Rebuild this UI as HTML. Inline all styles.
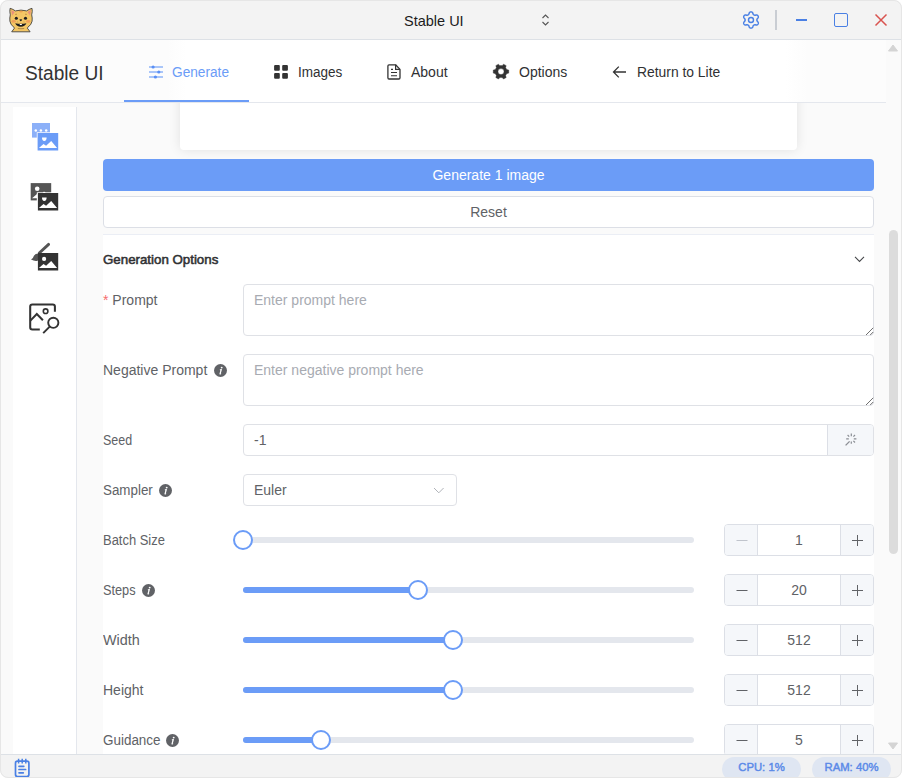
<!DOCTYPE html>
<html><head><meta charset="utf-8">
<style>
*{box-sizing:border-box;margin:0;padding:0}
html,body{width:902px;height:778px;overflow:hidden;background:#fff;font-family:"Liberation Sans",sans-serif}
.a{position:absolute}
#win{position:absolute;left:0;top:0;width:902px;height:778px;border-radius:8px;overflow:hidden;background:#fafafa}
#frame{position:absolute;left:0;top:0;width:902px;height:778px;border:1px solid #e6e6e6;border-radius:8px;pointer-events:none}
.t{white-space:nowrap;line-height:1}
.lbl{position:absolute;left:103px;font-size:14px;color:#606266;white-space:nowrap;line-height:16px}
.box{position:absolute;background:#fff;border:1px solid #dfe1e6;border-radius:4px}
.ph{position:absolute;font-size:14px;color:#a8abb2;white-space:nowrap;line-height:16px}
.info{position:absolute;width:13px;height:13px}
.track{position:absolute;left:243px;width:451px;height:6px;border-radius:3px;background:#e4e7ed}
.fill{position:absolute;left:0;top:0;height:6px;border-radius:3px;background:#6b9cf7}
.thumb{position:absolute;width:20px;height:20px;border:2px solid #6b9cf7;border-radius:50%;background:#fff}
.num{position:absolute;left:724px;width:150px;height:32px;background:#fff;border:1px solid #dcdfe6;border-radius:4px;overflow:hidden}
.num .m,.num .p{position:absolute;top:0;width:33px;height:30px;background:#f5f7fa;color:#606266}.num svg{display:block}
.num .m{left:0;border-right:1px solid #dcdfe6}
.num .p{right:0;border-left:1px solid #dcdfe6}
.num .v{position:absolute;left:33px;right:33px;top:0;height:30px;line-height:30px;text-align:center;font-size:14px;color:#606266}
</style></head><body>
<div id="win">
  <!-- scroll content -->
  <div class="a" style="left:0;top:40px;width:886px;height:714px;background:#fafafa"></div>
  <!-- left strip + sidebar -->
  <div class="a" style="left:13px;top:107px;width:64px;height:647px;background:#fff;border-right:1px solid #e4e7ed"></div>
  <!-- sidebar icons -->
  <svg class="a" style="left:28px;top:119px" width="34" height="36" viewBox="28 119 34 36">
    <rect x="32" y="123" width="18" height="14.6" fill="#8cb0f8"/>
    <circle cx="35.8" cy="130.4" r="1.25" fill="#fff"/><circle cx="40.9" cy="130.4" r="1.25" fill="#fff"/><circle cx="46.2" cy="130.4" r="1.25" fill="#fff"/>
    <rect x="36.8" y="132.3" width="22" height="19" fill="#fff"/>
    <rect x="37.6" y="133" width="20.6" height="17.5" fill="#6b9cf7"/>
    <path d="M42 137.6 L46.6 137.6 Q46.6 141 44.3 141 Q42 141 42 137.6Z" fill="#fff"/>
    <path d="M38.9 147.9 L43.5 144 L46.1 145.8 L51.2 141 L57.1 147.9 Z" fill="#fff"/>
  </svg>
  <svg class="a" style="left:28px;top:179px" width="34" height="36" viewBox="28 179 34 36">
    <rect x="30.7" y="183.1" width="20.5" height="17.3" fill="#555"/>
    <circle cx="37.2" cy="188.8" r="2.3" fill="#fff"/>
    <path d="M32 198.2 L37 194 L40 196 L44 191.5 L47 194 L47 198.2 Z" fill="#fff"/>
    <rect x="36.8" y="192.3" width="22" height="19" fill="#fff"/>
    <rect x="37.9" y="193" width="20.3" height="17.5" fill="#333"/>
    <path d="M42 197.6 L46.6 197.6 Q46.6 201 44.3 201 Q42 201 42 197.6Z" fill="#fff"/>
    <path d="M38.9 207.9 L43.5 204 L46.1 205.8 L51.2 201 L57.1 207.9 Z" fill="#fff"/>
  </svg>
  <svg class="a" style="left:28px;top:239px" width="34" height="36" viewBox="28 239 34 36">
    <path d="M48.6 244.4 L39.3 253" stroke="#555" stroke-width="2.9" stroke-linecap="round"/>
    <path d="M39.5 253.6 Q35.2 253.4 33.8 256 Q33.3 258.4 31 259.6 Q34.3 261.3 36.8 260.9 Q39.5 260.3 39.5 257 Z" fill="#555"/>
    <rect x="37.9" y="253" width="20.3" height="17.5" fill="#333"/>
    <circle cx="44.1" cy="258.9" r="2.1" fill="#fff"/>
    <path d="M38.9 267.9 L43.5 264 L46.1 265.8 L51.2 261 L57.1 267.9 Z" fill="#fff"/>
  </svg>
  <svg class="a" style="left:28px;top:299px" width="34" height="38" viewBox="28 299 34 38">
    <path d="M54.9 311.8 L54.9 306.6 Q54.9 304.4 52.7 304.4 L32.4 304.4 Q30.2 304.4 30.2 306.6 L30.2 327.2 Q30.2 329.4 32.4 329.4 L39.8 329.4" fill="none" stroke="#333" stroke-width="2.05"/>
    <path d="M30.4 320.6 L36.8 314 L42.9 320.2" fill="none" stroke="#333" stroke-width="2"/>
    <circle cx="45.6" cy="311.2" r="2.3" fill="none" stroke="#333" stroke-width="1.6"/>
    <circle cx="53.3" cy="322.8" r="5.1" fill="none" stroke="#333" stroke-width="1.9"/>
    <path d="M49.7 326.6 L43.2 333.1" stroke="#333" stroke-width="1.9"/>
  </svg>
  <!-- card -->
  <div class="a" style="left:180px;top:20px;width:617px;height:130px;background:#fff;border-radius:4px;box-shadow:0 0 12px rgba(0,0,0,.1)"></div>
  <!-- buttons -->
  <div class="a t" style="left:103px;top:159px;width:771px;height:32px;background:#6b9cf7;border-radius:4px;color:#fff;font-size:14px;line-height:32px;text-align:center">Generate 1 image</div>
  <div class="a t" style="left:103px;top:196px;width:771px;height:32px;background:#fff;border:1px solid #dcdfe6;border-radius:4px;color:#606266;font-size:14px;line-height:30px;text-align:center">Reset</div>
  <!-- section -->
  <div class="a" style="left:103px;top:234px;width:771px;height:530px;background:#fff;border-top:1px solid #ebeef5"></div>
  <div class="a t" style="left:103px;top:253px;font-size:13.3px;-webkit-text-stroke:0.55px #303133;color:#303133">Generation Options</div>
  <svg class="a" style="left:853px;top:254px" width="13" height="10" viewBox="0 0 13 10"><path d="M2 2.8 L6.5 7.4 L11 2.8" fill="none" stroke="#45474a" stroke-width="1.05"/></svg>

  <div class="lbl" style="top:292px"><span style="color:#f56c6c">*</span> Prompt</div>
  <div class="box" style="left:243px;top:284px;width:631px;height:52px"></div>
  <div class="ph" style="left:254px;top:292px">Enter prompt here</div>

  <div class="lbl" style="top:362px">Negative Prompt</div>
  <div class="info" style="left:214px;top:364px"><svg width="13" height="13" viewBox="0 0 13 13" style="display:block"><circle cx="6.5" cy="6.5" r="6.5" fill="#606266"/><circle cx="7.7" cy="3.6" r="0.95" fill="#fff"/><path d="M7.3 5.6 L6.1 9.6 Q5.9 10.2 6.6 9.8 M6.4 5.9 L7.3 5.6" fill="none" stroke="#fff" stroke-width="1.25" stroke-linecap="round" stroke-linejoin="round"/></svg></div>
  <div class="box" style="left:243px;top:354px;width:631px;height:52px"></div>
  <div class="ph" style="left:254px;top:362px">Enter negative prompt here</div>

  <div class="lbl" style="top:432px;transform:scaleX(0.89);transform-origin:0 0">Seed</div>
  <div class="box" style="left:243px;top:424px;width:631px;height:32px;overflow:hidden">
    <div class="a" style="right:0;top:0;width:46px;height:30px;background:#f5f7fa;border-left:1px solid #dcdfe6"></div>
  </div>
  <div class="ph" style="left:254px;top:432px;color:#606266">-1</div>

  <svg class="a" style="left:843px;top:431px" width="16" height="16" viewBox="843 431 16 16">
    <path d="M845.6 445.4 L849.6 441.4" stroke="#8a8d93" stroke-width="1.3"/>
    <path d="M851.3 433.6 L851.3 436.2 M851.3 441.4 L851.3 443.8 M846.2 438.8 L848.8 438.8 M853.8 438.8 L856.4 438.8 M847.6 435 L849.2 436.6 M853.4 440.9 L855 442.5 M855 435 L853.4 436.6" stroke="#8a8d93" stroke-width="1.2"/>
  </svg>
  <svg class="a" style="left:862px;top:324px" width="12" height="12" viewBox="0 0 12 12"><path d="M4 11 L11.2 3.8 M8.2 11 L11.2 8" stroke="#555" stroke-width="0.85"/></svg>
  <svg class="a" style="left:862px;top:394px" width="12" height="12" viewBox="0 0 12 12"><path d="M4 11 L11.2 3.8 M8.2 11 L11.2 8" stroke="#555" stroke-width="0.85"/></svg>
  <div class="lbl" style="top:482px;transform:scaleX(0.955);transform-origin:0 0">Sampler</div>
  <div class="info" style="left:159px;top:484px"><svg width="13" height="13" viewBox="0 0 13 13" style="display:block"><circle cx="6.5" cy="6.5" r="6.5" fill="#606266"/><circle cx="7.7" cy="3.6" r="0.95" fill="#fff"/><path d="M7.3 5.6 L6.1 9.6 Q5.9 10.2 6.6 9.8 M6.4 5.9 L7.3 5.6" fill="none" stroke="#fff" stroke-width="1.25" stroke-linecap="round" stroke-linejoin="round"/></svg></div>
  <div class="box" style="left:243px;top:474px;width:214px;height:32px"></div>
  <div class="ph" style="left:254px;top:482px;color:#606266">Euler</div>
  <svg class="a" style="left:432px;top:486px" width="13" height="9" viewBox="0 0 13 9"><path d="M2 2 L6.8 6.8 L11.6 2" fill="none" stroke="#b0b3b9" stroke-width="1"/></svg>

  <div class="lbl" style="top:532px;transform:scaleX(0.925);transform-origin:0 0">Batch Size</div>
  <div class="track" style="top:537px"><div class="fill" style="width:0"></div></div>
  <div class="thumb" style="left:233px;top:530px"></div>
  <div class="num" style="top:524px"><div class="m" style="color:#c0c4cc"><svg width="33" height="30" viewBox="0 0 33 30"><path d="M11.5 15.5 L22.5 15.5" stroke="currentColor" stroke-width="1.05"/></svg></div><div class="v">1</div><div class="p"><svg width="33" height="30" viewBox="0 0 33 30"><path d="M11 15.5 L22 15.5 M16.5 10 L16.5 21" stroke="currentColor" stroke-width="1.05"/></svg></div></div>

  <div class="lbl" style="top:582px;transform:scaleX(0.91);transform-origin:0 0">Steps</div>
  <div class="info" style="left:142px;top:584px"><svg width="13" height="13" viewBox="0 0 13 13" style="display:block"><circle cx="6.5" cy="6.5" r="6.5" fill="#606266"/><circle cx="7.7" cy="3.6" r="0.95" fill="#fff"/><path d="M7.3 5.6 L6.1 9.6 Q5.9 10.2 6.6 9.8 M6.4 5.9 L7.3 5.6" fill="none" stroke="#fff" stroke-width="1.25" stroke-linecap="round" stroke-linejoin="round"/></svg></div>
  <div class="track" style="top:587px"><div class="fill" style="width:175px"></div></div>
  <div class="thumb" style="left:408px;top:580px"></div>
  <div class="num" style="top:574px"><div class="m"><svg width="33" height="30" viewBox="0 0 33 30"><path d="M11.5 15.5 L22.5 15.5" stroke="currentColor" stroke-width="1.05"/></svg></div><div class="v">20</div><div class="p"><svg width="33" height="30" viewBox="0 0 33 30"><path d="M11 15.5 L22 15.5 M16.5 10 L16.5 21" stroke="currentColor" stroke-width="1.05"/></svg></div></div>

  <div class="lbl" style="top:632px;transform:scaleX(1.03);transform-origin:0 0">Width</div>
  <div class="track" style="top:637px"><div class="fill" style="width:210px"></div></div>
  <div class="thumb" style="left:443px;top:630px"></div>
  <div class="num" style="top:624px"><div class="m"><svg width="33" height="30" viewBox="0 0 33 30"><path d="M11.5 15.5 L22.5 15.5" stroke="currentColor" stroke-width="1.05"/></svg></div><div class="v">512</div><div class="p"><svg width="33" height="30" viewBox="0 0 33 30"><path d="M11 15.5 L22 15.5 M16.5 10 L16.5 21" stroke="currentColor" stroke-width="1.05"/></svg></div></div>

  <div class="lbl" style="top:682px">Height</div>
  <div class="track" style="top:687px"><div class="fill" style="width:210px"></div></div>
  <div class="thumb" style="left:443px;top:680px"></div>
  <div class="num" style="top:674px"><div class="m"><svg width="33" height="30" viewBox="0 0 33 30"><path d="M11.5 15.5 L22.5 15.5" stroke="currentColor" stroke-width="1.05"/></svg></div><div class="v">512</div><div class="p"><svg width="33" height="30" viewBox="0 0 33 30"><path d="M11 15.5 L22 15.5 M16.5 10 L16.5 21" stroke="currentColor" stroke-width="1.05"/></svg></div></div>

  <div class="lbl" style="top:732px;transform:scaleX(0.96);transform-origin:0 0">Guidance</div>
  <div class="info" style="left:166px;top:734px"><svg width="13" height="13" viewBox="0 0 13 13" style="display:block"><circle cx="6.5" cy="6.5" r="6.5" fill="#606266"/><circle cx="7.7" cy="3.6" r="0.95" fill="#fff"/><path d="M7.3 5.6 L6.1 9.6 Q5.9 10.2 6.6 9.8 M6.4 5.9 L7.3 5.6" fill="none" stroke="#fff" stroke-width="1.25" stroke-linecap="round" stroke-linejoin="round"/></svg></div>
  <div class="track" style="top:737px"><div class="fill" style="width:78px"></div></div>
  <div class="thumb" style="left:311px;top:730px"></div>
  <div class="num" style="top:724px"><div class="m"><svg width="33" height="30" viewBox="0 0 33 30"><path d="M11.5 15.5 L22.5 15.5" stroke="currentColor" stroke-width="1.05"/></svg></div><div class="v">5</div><div class="p"><svg width="33" height="30" viewBox="0 0 33 30"><path d="M11 15.5 L22 15.5 M16.5 10 L16.5 21" stroke="currentColor" stroke-width="1.05"/></svg></div></div>

  <!-- header (translucent) -->
  <div class="a" style="left:0;top:40px;width:886px;height:63px;background:linear-gradient(90deg,#fcfcfc 0,#fcfcfc 168px,#fff 186px,#fff 786px,#fcfcfc 808px);border-bottom:1px solid #e4e7ed"></div>
  <div class="a t" style="left:25px;top:63px;font-size:20px;color:#333;transform:scaleX(0.955);transform-origin:0 0">Stable UI</div>
  <div class="a" style="left:124px;top:100px;width:125px;height:2px;background:#6b9cf7"></div>
  <svg class="a" style="left:148px;top:64px" width="16" height="16" viewBox="148 64 16 16">
    <path d="M149 67 L163 67 M149 72 L163 72 M149 77 L163 77" stroke="#6b9cf7" stroke-width="1.3" opacity=".75"/>
    <circle cx="153.1" cy="67" r="1.6" fill="#5a8ff5"/><circle cx="158.8" cy="72" r="1.6" fill="#5a8ff5"/><circle cx="155.4" cy="77" r="1.6" fill="#5a8ff5"/>
  </svg>
  <svg class="a" style="left:273px;top:64px" width="16" height="16" viewBox="273 64 16 16">
    <rect x="274.1" y="65.1" width="5.7" height="5.7" rx="1" fill="#333"/><rect x="282.2" y="65.1" width="5.7" height="5.7" rx="1" fill="#333"/>
    <rect x="274.1" y="73.1" width="5.7" height="5.6" rx="1" fill="#333"/><rect x="282.2" y="73.1" width="5.7" height="5.6" rx="1" fill="#333"/>
  </svg>
  <svg class="a" style="left:386px;top:63px" width="16" height="18" viewBox="386 63 16 18">
    <path d="M389 64.8 L395.6 64.8 L400 69.4 L400 77.8 Q400 79 398.8 79 L389 79 Q387.9 79 387.9 77.8 L387.9 66 Q387.9 64.8 389 64.8 Z" fill="none" stroke="#333" stroke-width="1.3" stroke-linejoin="round"/>
    <path d="M395.6 64.8 L395.6 69.4 L400 69.4" fill="none" stroke="#333" stroke-width="1.2"/>
    <path d="M391 69.4 L393 69.4 M391 72.5 L397 72.5 M391 75.8 L397 75.8" stroke="#333" stroke-width="1.1"/>
  </svg>
  <svg class="a" style="left:492px;top:63px" width="18" height="18" viewBox="492 63 18 18">
    <path fill="#333" fill-rule="evenodd" stroke="#333" stroke-width="0.4" stroke-linejoin="round" d="M506.64 69.55 L508.75 70.09 L508.75 73.11 L506.64 73.65 L506.44 74.14 L506.20 74.60 L505.91 75.04 L505.60 75.46 L506.18 77.56 L503.57 79.07 L502.04 77.51 L501.52 77.58 L501.00 77.60 L500.48 77.58 L499.96 77.51 L498.43 79.07 L495.82 77.56 L496.40 75.46 L496.09 75.04 L495.80 74.60 L495.56 74.14 L495.36 73.65 L493.25 73.11 L493.25 70.09 L495.36 69.55 L495.56 69.06 L495.80 68.60 L496.09 68.16 L496.40 67.74 L495.82 65.64 L498.43 64.13 L499.96 65.69 L500.48 65.62 L501.00 65.60 L501.52 65.62 L502.04 65.69 L503.57 64.13 L506.18 65.64 L505.60 67.74 L505.91 68.16 L506.20 68.60 L506.44 69.06 Z M504.00 71.60 A3 3 0 1 0 498.00 71.60 A3 3 0 1 0 504.00 71.60 Z"/>
  </svg>
  <svg class="a" style="left:611px;top:64px" width="17" height="16" viewBox="611 64 17 16">
    <path d="M626 72 L614.5 72 M618.8 66.6 L613.5 72 L618.8 77.4" fill="none" stroke="#333" stroke-width="1.3"/>
  </svg>
  <div class="a t" style="left:172px;top:65px;font-size:14px;color:#6b9cf7;transform:scaleX(0.977);transform-origin:0 0">Generate</div>
  <div class="a t" style="left:298px;top:65px;font-size:14px;color:#303133;transform:scaleX(0.965);transform-origin:0 0">Images</div>
  <div class="a t" style="left:411px;top:65px;font-size:14px;color:#303133">About</div>
  <div class="a t" style="left:519px;top:65px;font-size:14px;color:#303133">Options</div>
  <div class="a t" style="left:637px;top:65px;font-size:14px;color:#303133;transform:scaleX(0.99);transform-origin:0 0">Return to Lite</div>

  <!-- scrollbar -->
  <div class="a" style="left:886px;top:40px;width:15px;height:714px;background:#fafafa"></div>
  <div class="a" style="left:889px;top:230px;width:9px;height:324px;border-radius:5px;background:#dcdcdc"></div>
  <svg class="a" style="left:888px;top:43px" width="10" height="9" viewBox="0 0 10 9"><path d="M0.5 8 L5 2 L9.5 8 Z" fill="#d4d4d4" stroke="#d4d4d4" stroke-width="1" stroke-linejoin="round"/></svg>
  <svg class="a" style="left:888px;top:742px" width="10" height="9" viewBox="0 0 10 9"><path d="M0.5 1 L5 7 L9.5 1 Z" fill="#d4d4d4" stroke="#d4d4d4" stroke-width="1" stroke-linejoin="round"/></svg>

  <!-- title bar -->
  <div class="a" style="left:0;top:0;width:902px;height:40px;background:#f3f3f3;border-bottom:1px solid #dde1e6"></div>
  <svg class="a" style="left:6px;top:5px" width="30" height="30" viewBox="0 0 30 30">
    <path d="M4.1 3.3 Q7 4.2 9.4 5.9 Q15 4.3 20.6 5.9 Q23 4.2 26 3.3 Q26.7 6.5 25.7 9.8 Q26.5 13 26.1 16.2 Q25.3 20 21.9 22.2 L21.3 23.1 L24.1 26.8 L5.7 26.8 L8.5 23.1 L7.9 22.2 Q4.5 20 3.9 16.2 Q3.5 13 4.3 9.8 Q3.4 6.5 4.1 3.3 Z" fill="#f3c665" stroke="#3a3a3a" stroke-width="0.85" stroke-linejoin="round"/>
    <path d="M5.2 5 L8.8 6.9 L6.1 10.6 Z M25 5 L21.4 6.9 L24.1 10.6 Z" fill="#e8907c"/>
    <path d="M12.8 6.2 Q15 8.6 17.2 6.2 Q15 5.4 12.8 6.2Z" fill="#eca04e"/>
    <path d="M9.2 9.4 L11 9.2 M19 9.2 L20.8 9.4" stroke="#9a6a30" stroke-width="0.6"/>
    <ellipse cx="7.7" cy="16.4" rx="2.2" ry="1.3" fill="#f0a05a"/><ellipse cx="22.2" cy="16.4" rx="2.2" ry="1.3" fill="#f0a05a"/>
    <circle cx="10.3" cy="13.3" r="1.55" fill="#1e1e1e"/><circle cx="19.5" cy="13.3" r="1.55" fill="#1e1e1e"/>
    <path d="M13.4 14.5 Q14.8 14.2 16.2 14.5 Q15.7 16.2 14.8 16.3 Q13.9 16.2 13.4 14.5 Z" fill="#1e1e1e"/>
    <path d="M11.6 16.6 L11.6 17.3 M18 16.6 L18 17.3" stroke="#9a6a30" stroke-width="0.6"/>
    <path d="M9.2 18.3 Q15 19.3 20.4 18.3 Q19 21.7 14.8 21.7 Q10.6 21.7 9.2 18.3 Z" fill="#1e1e1e"/>
    <path d="M13.7 18.9 L15.9 18.9 L15.8 20.1 L13.8 20.1 Z" fill="#fff"/>
    <path d="M11.8 23.5 Q15 24 18.2 23.5" fill="none" stroke="#7a5a30" stroke-width="0.6"/>
  </svg>
  <div class="a t" style="left:404px;top:14px;font-size:14.5px;color:#1c1c1c">Stable UI</div>
  <svg class="a" style="left:540px;top:13px" width="11" height="14" viewBox="0 0 11 14"><path d="M2.5 5 L5.5 2 L8.5 5 M2.5 9 L5.5 12 L8.5 9" fill="none" stroke="#555" stroke-width="1.1"/></svg>
  <svg class="a" style="left:741px;top:10px" width="20" height="20" viewBox="0 0 20 20">
    <path d="M10.00 1.85 L10.42 1.90 L10.84 2.03 L11.23 2.26 L11.57 2.60 L11.81 3.24 L11.99 3.88 L12.21 4.25 L12.44 4.53 L12.67 4.76 L12.92 4.93 L13.20 5.07 L13.52 5.16 L13.88 5.21 L14.30 5.22 L14.95 5.05 L15.62 4.94 L16.09 5.07 L16.48 5.29 L16.81 5.58 L17.06 5.92 L17.23 6.32 L17.32 6.74 L17.32 7.19 L17.20 7.66 L16.76 8.19 L16.29 8.66 L16.09 9.04 L15.95 9.37 L15.88 9.69 L15.85 10.00 L15.88 10.31 L15.95 10.63 L16.09 10.96 L16.29 11.34 L16.76 11.81 L17.20 12.34 L17.32 12.81 L17.32 13.26 L17.23 13.68 L17.06 14.07 L16.81 14.42 L16.48 14.71 L16.09 14.93 L15.62 15.06 L14.95 14.95 L14.30 14.78 L13.88 14.79 L13.52 14.84 L13.20 14.93 L12.92 15.07 L12.67 15.24 L12.44 15.47 L12.21 15.75 L11.99 16.12 L11.81 16.76 L11.57 17.40 L11.23 17.74 L10.84 17.97 L10.42 18.10 L10.00 18.15 L9.58 18.10 L9.16 17.97 L8.77 17.74 L8.43 17.40 L8.19 16.76 L8.01 16.12 L7.79 15.75 L7.56 15.47 L7.33 15.24 L7.08 15.07 L6.80 14.93 L6.48 14.84 L6.12 14.79 L5.70 14.78 L5.05 14.95 L4.38 15.06 L3.91 14.93 L3.52 14.71 L3.19 14.42 L2.94 14.08 L2.77 13.68 L2.68 13.26 L2.68 12.81 L2.80 12.34 L3.24 11.81 L3.71 11.34 L3.91 10.96 L4.05 10.63 L4.12 10.31 L4.15 10.00 L4.12 9.69 L4.05 9.37 L3.91 9.04 L3.71 8.66 L3.24 8.19 L2.80 7.66 L2.68 7.19 L2.68 6.74 L2.77 6.32 L2.94 5.92 L3.19 5.58 L3.52 5.29 L3.91 5.07 L4.38 4.94 L5.05 5.05 L5.70 5.22 L6.12 5.21 L6.48 5.16 L6.80 5.07 L7.08 4.93 L7.33 4.76 L7.56 4.53 L7.79 4.25 L8.01 3.88 L8.19 3.24 L8.43 2.60 L8.77 2.26 L9.16 2.03 L9.58 1.90 Z" fill="none" stroke="#4a80e4" stroke-width="1.45" stroke-linejoin="round"/>
    <circle cx="10" cy="10" r="2.5" fill="none" stroke="#4a80e4" stroke-width="1.4"/>
  </svg>
  <div class="a" style="left:775px;top:10px;width:2px;height:20px;background:#c9cdd3"></div>
  <div class="a" style="left:796px;top:19px;width:11px;height:1.6px;background:#4a80e4"></div>
  <div class="a" style="left:834px;top:13px;width:14px;height:14px;border:1.6px solid #4a80e4;border-radius:2px"></div>
  <svg class="a" style="left:874px;top:13px" width="14" height="14" viewBox="0 0 14 14"><path d="M1.5 1.5 L12.5 12.5 M12.5 1.5 L1.5 12.5" stroke="#d9534f" stroke-width="1.5"/></svg>

  <!-- status bar -->
  <div class="a" style="left:0;top:754px;width:902px;height:24px;background:#f3f3f3;border-top:1px solid #dde1e6"></div>
  <svg class="a" style="left:13px;top:757px" width="18" height="21" viewBox="13 757 18 21">
    <rect x="15.5" y="761.2" width="13.4" height="15.4" rx="2" fill="none" stroke="#4a80e4" stroke-width="1.7"/>
    <path d="M18.6 758.8 L18.6 763.4 M22.2 758.8 L22.2 763.4 M25.8 758.8 L25.8 763.4" stroke="#4a80e4" stroke-width="1.5"/>
    <path d="M19 766.3 L23.8 766.3 M19 769.5 L25.6 769.5 M19 772.8 L23.3 772.8" stroke="#4a80e4" stroke-width="1.7" stroke-linecap="round"/>
  </svg>
  <div class="a t" style="left:722px;top:757px;width:79px;height:24px;border-radius:12px;background:#dfe6f2;color:#5b8ae8;font-size:11.3px;-webkit-text-stroke:0.45px #5b8ae8;line-height:21px;text-align:center">CPU: 1%</div>
  <div class="a t" style="left:812px;top:757px;width:79px;height:24px;border-radius:12px;background:#dfe6f2;color:#5b8ae8;font-size:11.3px;-webkit-text-stroke:0.45px #5b8ae8;line-height:21px;text-align:center">RAM: 40%</div>
</div>
<div id="frame"></div>
</body></html>
